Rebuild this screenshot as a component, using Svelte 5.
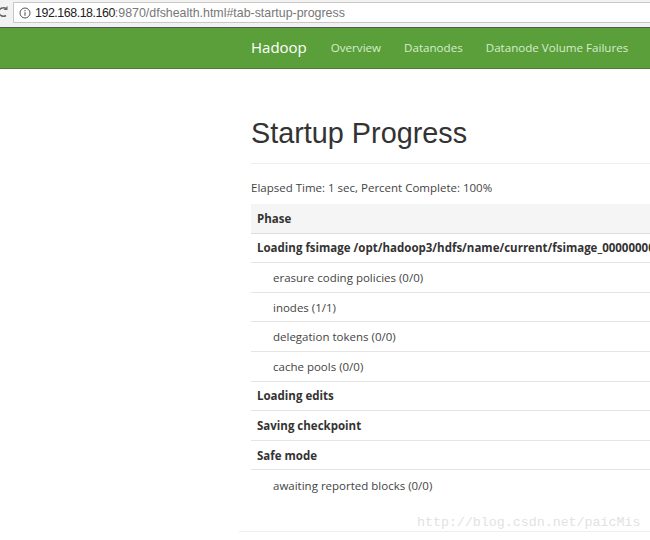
<script>
  const rows = [
    { label: 'Loading fsimage /opt/hadoop3/hdfs/name/current/fsimage_0000000000000000000', bold: true },
    { label: 'erasure coding policies (0/0)' },
    { label: 'inodes (1/1)' },
    { label: 'delegation tokens (0/0)' },
    { label: 'cache pools (0/0)' },
    { label: 'Loading edits', bold: true },
    { label: 'Saving checkpoint', bold: true },
    { label: 'Safe mode', bold: true },
    { label: 'awaiting reported blocks (0/0)' },
  ]
  const links = ['Overview', 'Datanodes', 'Datanode Volume Failures']
</script>

<div class="page">
  <div class="chrome">
    <svg class="reload" width="8" height="16" viewBox="0 0 8 16">
      <path d="M6 4.5A5 5 0 0 0 -1.5 8a5 5 0 0 0 7.5 3.5" fill="none" stroke="#666" stroke-width="1.5" />
      <path d="M7.5 2v4h-4z" fill="#666" />
    </svg>
    <div class="address">
      <svg width="12" height="12" viewBox="0 0 12 12">
        <circle cx="6" cy="6" r="5" fill="none" stroke="#555" stroke-width="1" />
        <path d="M6 5.2v3.6M6 3v1.2" stroke="#555" stroke-width="1.1" />
      </svg>
      <span class="url"><span class="host">192.168.18.160</span>:9870/dfshealth.html#tab-startup-progress</span>
    </div>
  </div>

  <nav>
    <span class="brand">Hadoop</span>
    {#each links as link}
      <span class="link">{link}</span>
    {/each}
  </nav>

  <main>
    <h1>Startup Progress</h1>
    <p class="elapsed">Elapsed Time: 1 sec, Percent Complete: 100%</p>
    <div class="table">
      <div class="row head">Phase</div>
      {#each rows as row}
        <div class="row" class:bold={row.bold} class:step={!row.bold}>{row.label}</div>
      {/each}
    </div>
    <div class="footer-line"></div>
  </main>

  <span class="watermark">http://blog.csdn.net/paicMis</span>
</div>

<style>
  :global(body) {
    margin: 0;
    background: #fff;
  }

  .page {
    position: relative;
    width: 650px;
    height: 540px;
    overflow: hidden;
    font-family: "Open Sans", "Noto Sans", sans-serif;
    color: #333;
  }

  .chrome {
    height: 28px;
    box-sizing: border-box;
    display: flex;
    align-items: flex-start;
    gap: 5px;
    background: #f2f2f2;
    border-bottom: 1px solid #555;
  }

  .reload {
    margin-top: 4px;
    flex: none;
  }

  .address {
    flex: 1;
    height: 21px;
    box-sizing: border-box;
    margin-top: 2px;
    padding-left: 5px;
    display: flex;
    align-items: center;
    gap: 4px;
    background: #fff;
    border: 1px solid #c9c7c2;
    border-right: none;
  }

  .url {
    font-family: "Liberation Sans", Arial, sans-serif;
    font-size: 12.4px;
    color: #777;
  }

  .host {
    color: #222;
    letter-spacing: -0.45px;
  }

  nav {
    height: 41px;
    box-sizing: border-box;
    padding: 0 0 2px 251px;
    display: flex;
    align-items: center;
    background: #5b9f3b;
    border-bottom: 1px solid #4a7f34;
    white-space: nowrap;
  }

  .brand {
    font-size: 15px;
    color: #fff;
    margin-right: 24px;
  }

  .link {
    font-size: 11.6px;
    color: #d5eecb;
    margin-right: 23px;
  }

  main {
    padding: 47px 0 0 251px;
    white-space: nowrap;
  }

  h1 {
    margin: 0;
    padding-bottom: 13px;
    font-family: "Liberation Sans", Arial, sans-serif;
    font-size: 28.8px;
    line-height: 34px;
    font-weight: 400;
    color: #333;
    border-bottom: 1px solid #eee;
  }

  .elapsed {
    margin: 16px 0 0;
    font-size: 11.5px;
    line-height: 16px;
    color: #444;
  }

  .table {
    margin-top: 8px;
  }

  .row {
    height: 29.6px;
    box-sizing: border-box;
    padding-left: 6px;
    display: flex;
    align-items: center;
    font-size: 11.5px;
    border-bottom: 1px solid #e4e4e4;
  }

  .head {
    background: #f5f5f5;
    font-weight: 700;
    border-bottom: 1px solid #ddd;
  }

  .bold {
    font-weight: 700;
  }

  .step {
    padding-left: 22px;
    color: #444;
  }

  .row:last-child {
    border-bottom: none;
  }

  .footer-line {
    margin: 31px 0 0 -12px;
    border-top: 1px solid #eee;
  }

  .watermark {
    position: absolute;
    left: 417px;
    top: 515px;
    font-family: "Liberation Mono", monospace;
    font-size: 13.3px;
    color: #e2e2e2;
  }
</style>
